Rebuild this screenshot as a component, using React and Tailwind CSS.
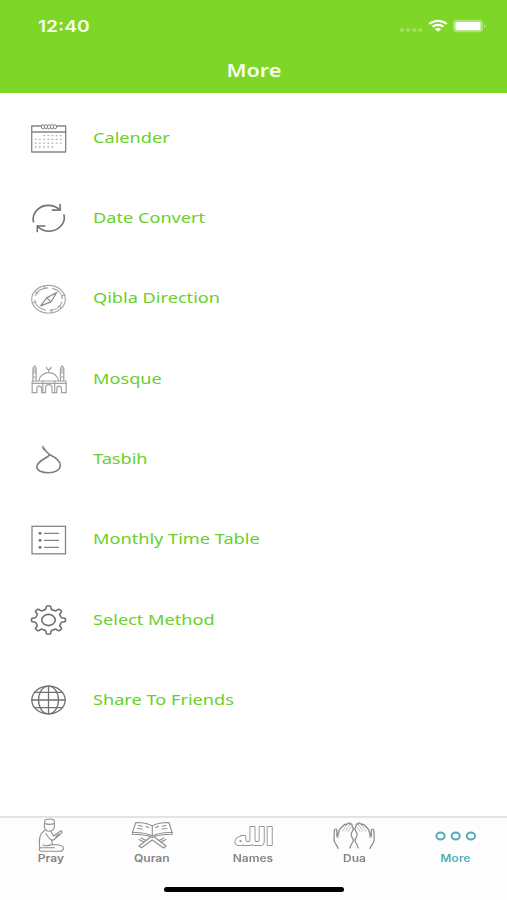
const CALENDAR_COLS = [7.7, 11.8, 16.2, 20.3, 24.4, 28.6, 32.7];

const gearPath = () => {
  const point = (deg, r) => {
    const a = (deg * Math.PI) / 180;
    return `${(20.5 + 17 * r * Math.cos(a)).toFixed(2)} ${(18 + 14 * r * Math.sin(a)).toFixed(2)}`;
  };
  let d = "";
  for (let i = 0; i < 8; i++) {
    const a = i * 45;
    d += `${i === 0 ? "M" : "L"}${point(a - 10, 0.84)} Q${point(a - 9, 0.98)} ${point(a - 5, 1)} L${point(a + 5, 1)} Q${point(a + 9, 0.98)} ${point(a + 10, 0.84)} Q${point(a + 12, 0.75)} ${point(a + 18, 0.76)} L${point(a + 27, 0.76)} Q${point(a + 33, 0.75)} ${point(a + 35, 0.84)} `;
  }
  return d + "Z";
};

function RowIcon({ children, color = "#707070", width = 1.3 }) {
  return (
    <svg width="42" height="36" viewBox="0 0 42 36" fill="none" stroke={color} strokeWidth={width} strokeLinecap="round" strokeLinejoin="round">
      {children}
    </svg>
  );
}

function CalendarIcon() {
  return (
    <RowIcon color="#858585" width={1.3}>
      <rect x="3.7" y="6" width="34" height="26" />
      <path d="M3.7 12h34" />
      {[15, 18, 21, 24, 27].map((x) => (
        <ellipse key={x} cx={x} cy="6.8" rx="1.6" ry="2.2" strokeWidth="1" fill="#fff" />
      ))}
      {[15.6, 19.4, 23.2, 27].map((y, row) =>
        CALENDAR_COLS.filter((_, col) => (row === 0 ? col > 1 : row === 3 ? col < 5 : true)).map((x) => (
          <path key={`${x}-${y}`} d={`M${x - 0.4} ${y}h0.8`} stroke="#b4b4b4" />
        ))
      )}
    </RowIcon>
  );
}

function ConvertIcon() {
  return (
    <RowIcon width={1.6}>
      <path d="M5.5 21.8C3.5 13 11 5.5 20.3 5.4c4.7 0 8.7 1.7 11.7 4.6" />
      <path d="M32 4.6l.4 5.4-8 .1" />
      <path d="M36 15C38 23 30.5 31 21.2 31.3c-4.7 0-8.9-2-11.7-5.3" />
      <path d="M9.3 31.6v-5.6h7.6" />
    </RowIcon>
  );
}

function CompassIcon() {
  return (
    <RowIcon color="#a8a8a8" width={1.2}>
      <ellipse cx="20.5" cy="18.2" rx="16.8" ry="13.8" />
      <ellipse cx="20.5" cy="18.2" rx="13.8" ry="11.3" strokeDasharray="15 5" strokeDashoffset="-3" />
      <path d="M16 4.8l1.5 3M24 31.5l-1-3M4.5 22l3.5-1M33.5 15l3.5-1M7 10.5l3 2M31 25l2.6 2" />
      <path d="M12.7 24.9l6-8 10-5.4-5.7 9.4zM18.7 16.9l4.3 4" stroke="#8c8c8c" />
    </RowIcon>
  );
}

function MosqueIcon() {
  return (
    <RowIcon color="#a3a3a3" width={1.2}>
      <path d="M4.2 31.7V20h33.9v11.7" />
      <path d="M4.9 20v-10l.2-3L6.6 4.8 8.2 7v13M4.9 8h3.3M4.9 10h3.3M4.9 12h3.3M4.9 16h3.3" />
      <path d="M32.4 20v-10l.2-3 1.6-2.2L35.8 7v13M32.4 8h3.4M32.4 10h3.4M32.4 12h3.4M32.4 16h3.4" />
      <path d="M11 19.5c.8-4.7 5-7.8 9.7-7.8s8.9 3.1 9.7 7.8" />
      <path d="M18.5 6.2c.2 3.2 4.4 3.2 4.5 0M20.7 8.8v2.7" />
      <path d="M4.2 22.3h33.9M14.8 20v11.7M26.7 20v11.7" />
      <path d="M4.2 31.7h4.7v-4c0-3.4 4.7-3.4 4.7 0v4h3.9v-4.5c0-4.8 6.6-4.8 6.6 0v4.5h4.7v-4c0-3.4 4.7-3.4 4.7 0v4h4.6" />
    </RowIcon>
  );
}

function TasbihIcon() {
  return (
    <RowIcon color="#7e7e7e" width={1.6}>
      <path d="M14.7 5.7l1.5 2.5" stroke="#a5a5a5" strokeWidth="2.3" />
      <path d="M15.5 7.5l5.5 5.7c1 1.3-.5 1.8-2 2.8-5 3.2-10.2 5.5-10.2 10 0 3.7 5.4 5.8 11.6 5.8s11.9-2.4 11.9-7.8c0-4.5-4.8-7.5-10.8-10.5" />
    </RowIcon>
  );
}

function TableIcon() {
  return (
    <RowIcon color="#858585">
      <rect x="4" y="4.3" width="33.5" height="27.5" strokeLinejoin="miter" />
      {[11.3, 18.3, 25.3].map((y) => (
        <g key={y}>
          <ellipse cx="12" cy={y} rx="1.5" ry="1.4" fill="#707070" stroke="none" />
          <path d={`M16.5 ${y}h14`} />
        </g>
      ))}
    </RowIcon>
  );
}

function GearIcon() {
  return (
    <RowIcon width={1.6}>
      <path d={gearPath()} />
      <ellipse cx="20.5" cy="18" rx="6.7" ry="5.6" />
    </RowIcon>
  );
}

function GlobeIcon() {
  return (
    <RowIcon>
      <ellipse cx="20.5" cy="18" rx="16.7" ry="13.8" />
      <ellipse cx="20.5" cy="18" rx="10" ry="13.8" />
      <path d="M20.5 4.2v27.6M3.8 18h33.4M7 10.3h27M7 25.7h27" />
    </RowIcon>
  );
}

function TabIcon({ children, color = "#8f8f8f", width = 1.1 }) {
  return (
    <svg width="48" height="36" viewBox="0 0 48 36" fill="none" stroke={color} strokeWidth={width} strokeLinecap="round" strokeLinejoin="round">
      {children}
    </svg>
  );
}

function PrayIcon() {
  return (
    <TabIcon>
      <path d="M17.5 5.5l.5-3.5c3-1.2 6.5-1.2 9 0l.5 3.5c-3 1-7 1-10 0z" />
      <path d="M17.5 6c-1 4 1 7.3 4.8 7.3 3.7 0 5.7-3 5-7.3" />
      <path d="M17.5 12.5c-4 2.5-6 9-4.8 17.5M24 13.5l2.5 4.5 7-5c1.5-.5 2 .8 1 2l-8 7c-2 .5-3.5-.5-4.8-2.5l-3-4" />
      <path d="M24.5 22l1 4.5c5 0 10.5.5 11 3.5.2 2.3-1.5 3.3-4 3.3H13.5c-1.5-.5-1.5-3 0-3.5h14M16 27c3 1.8 6 0 9.5-.5M29 18.5l3-2.5" />
    </TabIcon>
  );
}

function QuranIcon() {
  return (
    <TabIcon>
      <path d="M24.3 8c-4-3-10-3.3-16.5-3.5L4.5 14.5c8-.3 14 .5 19.8 3.5 5.8-3 11.8-3.8 19.8-3.5L40.8 4.5C34.3 4.7 28.3 5 24.3 8zM24.3 8v10" />
      <path d="M4.5 14.5l-.3 1.8c8 0 14 .5 20.1 3.2 6.1-2.7 12.1-3.2 20.1-3.2l-.3-1.8" />
      <path d="M10.5 7.5l4 .7M18 8.5l3 1M9.5 10.5l5 .5M38 7.5l-4 .7M30.5 8.5l-3 1M39 10.5l-5 .5" strokeDasharray="2 1" />
      <path d="M22 19.5L11 28l2.5 1.8L24.3 22 35.5 30l2.5-2L27 19.5M13 20l5 2.5M11 21.5l5 2.5M36 20l-5 2.5M38 21.5l-5 2.5" />
    </TabIcon>
  );
}

function NamesIcon() {
  return (
    <svg width="48" height="36" viewBox="0 0 48 36" className="overflow-visible will-change-transform">
      <text
        x="24.7"
        y="26.5"
        textAnchor="middle"
        textLength="40"
        lengthAdjust="spacingAndGlyphs"
        direction="rtl"
        paintOrder="stroke"
        className="fill-white stroke-[#96969c] stroke-2 font-['DejaVu_Sans',sans-serif] text-[24px] font-bold [stroke-linejoin:round]"
      >
        الله
      </text>
    </svg>
  );
}

function Hand() {
  return (
    <>
      <path d="M8 30.5c-.5-3-3.5-5-4-8.5l.3-9.5c.2-2 2.5-2 2.5 0l.2 6.5 2.5-7.5 5-5c1.2-1 2.2-.3 1.5.8M16 7.3l2-2c1.3-1 2.3 0 1.7 1.2M19.7 6.5c1.5-1.5 2.8-.3 2.3 1.2l1.5 3.3-2.2 4.2c-1.5 3 2.2 4.8 2 7.3-.3 2.5-3.3 4.5-3.3 7.5" />
      <path d="M16 7.3l-3.5 6M19.7 6.5L15.5 13M22 7.7l-4 6M9.5 12l-1 8" stroke="#b5b5b5" strokeWidth="0.8" />
    </>
  );
}

function DuaIcon() {
  return (
    <TabIcon color="#858585" width={1.2}>
      <Hand />
      <g transform="translate(48.2 0) scale(-1 1)">
        <Hand />
      </g>
    </TabIcon>
  );
}

function MoreIcon() {
  return (
    <TabIcon color="#4fadba" width={2}>
      {[9.5, 24.7, 39.9].map((x) => (
        <ellipse key={x} cx={x} cy="18" rx="4.1" ry="3.4" />
      ))}
    </TabIcon>
  );
}

const items = [
  { label: "Calender", icon: CalendarIcon },
  { label: "Date Convert", icon: ConvertIcon },
  { label: "Qibla Direction", icon: CompassIcon },
  { label: "Mosque", icon: MosqueIcon },
  { label: "Tasbih", icon: TasbihIcon },
  { label: "Monthly Time Table", icon: TableIcon },
  { label: "Select Method", icon: GearIcon },
  { label: "Share To Friends", icon: GlobeIcon },
];

const tabs = [
  { label: "Pray", icon: PrayIcon },
  { label: "Quran", icon: QuranIcon },
  { label: "Names", icon: NamesIcon },
  { label: "Dua", icon: DuaIcon },
  { label: "More", icon: MoreIcon, active: true },
];

function StatusIcons() {
  return (
    <svg width="90" height="16" viewBox="0 0 90 16" fill="none">
      {[4, 10.1, 16.2, 22.3].map((x) => (
        <ellipse key={x} cx={x} cy="12" rx="2.1" ry="1.8" fill="#fff" fillOpacity="0.3" />
      ))}
      <g stroke="#fff" strokeWidth="2.2">
        <path d="M31.3 6c4.8-4.3 12.6-4.3 17.4 0" />
        <path d="M34.5 8.8c3-2.7 8-2.7 11 0" />
      </g>
      <path d="M36.8 11c1.8-1.5 4.6-1.5 6.4 0l-3.2 2.8z" fill="#fff" />
      <rect x="55" y="1.8" width="30" height="12.4" rx="3.8" fill="#fff" fillOpacity="0.35" />
      <rect x="57.5" y="4" width="25" height="8.2" rx="1.5" fill="#fff" />
      <path d="M86.2 6.2c1.8.5 1.8 3.3 0 3.8z" fill="#fff" fillOpacity="0.5" />
    </svg>
  );
}

export default function App() {
  return (
    <div className="flex h-[900px] w-[507px] flex-col overflow-hidden bg-white">
      <header className="h-[93px] shrink-0 bg-[#7ed628] text-[#f7ffea]">
        <div className="flex h-[52px] items-center justify-between pr-[19px] pl-[38px]">
          <span className="inline-block origin-left scale-x-[1.2] font-['Inter',sans-serif] text-base font-semibold">12:40</span>
          <StatusIcons />
        </div>
        <h1 className="text-center text-[18px] leading-[37px] font-semibold">
          <span className="inline-block scale-x-[1.2] font-['Noto_Sans',sans-serif]">More</span>
        </h1>
      </header>

      <main className="flex-1 pt-[5px]">
        {items.map(({ label, icon: Icon }) => (
          <div key={label} className="flex h-[80.3px] items-center pl-7">
            <Icon />
            <span className="ml-[22.5px] inline-block origin-left scale-x-[1.21] pb-[2px] font-['Noto_Sans',sans-serif] text-[15px] whitespace-nowrap text-[#69cf2b]">
              {label}
            </span>
          </div>
        ))}
      </main>

      <nav className="h-[84px] shrink-0 border-t-2 border-[#e4e4e4] bg-[#fdfdfd]">
        <div className="grid w-[506px] grid-cols-5">
          {tabs.map(({ label, icon: Icon, active }) => (
            <div key={label} className="flex flex-col items-center">
              <Icon />
              <span
                className={`-mt-0.5 inline-block scale-x-[1.2] font-['Inter',sans-serif] text-[10px] leading-3 font-semibold ${
                  active ? "text-[#4fadba]" : "text-[#858585]"
                }`}
              >
                {label}
              </span>
            </div>
          ))}
        </div>
        <div className="mx-auto mt-[23px] h-[5px] w-[180px] rounded-full bg-black" />
      </nav>
    </div>
  );
}
